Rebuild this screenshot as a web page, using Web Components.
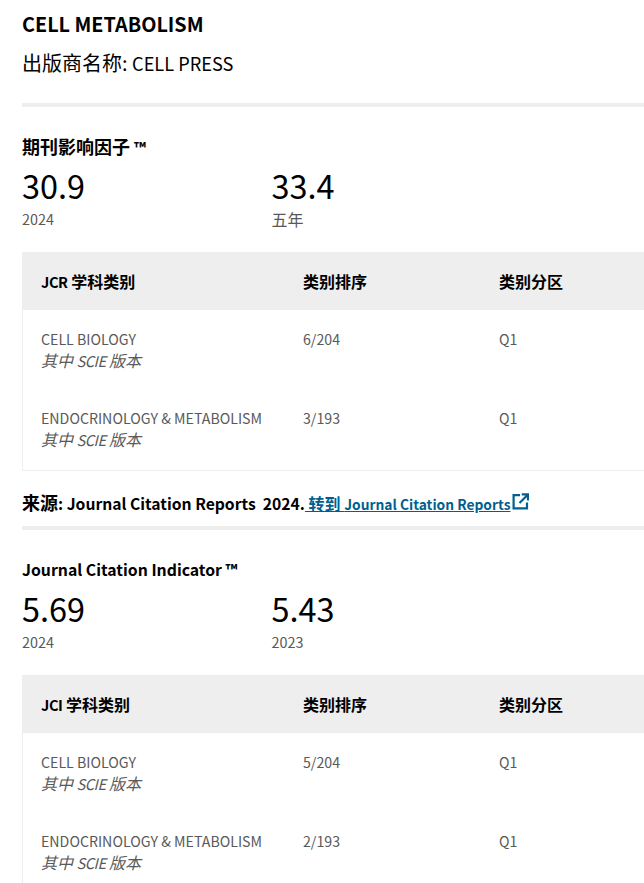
<!DOCTYPE html>
<html lang="zh">
<head>
<meta charset="utf-8">
<title>CELL METABOLISM</title>
<style>
    html, body { margin: 0; padding: 0; background: #fff; overflow: hidden; height: 883px; }
    body { font-family: "Noto Sans CJK SC", "Noto Sans", sans-serif; color: #000; }
</style>
</head>
<body>
<journal-panel>
    <journal-header title-text="CELL METABOLISM" publisher="出版商名称:" press="CELL PRESS"></journal-header>

    <metric-section heading="期刊影响因子" values="30.9|2024,33.4|五年"></metric-section>
    <rank-table first-latin="JCR" first-col="学科类别" rows="CELL BIOLOGY|6/204|Q1,ENDOCRINOLOGY &amp; METABOLISM|3/193|Q1"></rank-table>
    <source-line></source-line>

    <metric-section heading="Journal Citation Indicator" values="5.69|2024,5.43|2023"></metric-section>
    <rank-table first-latin="JCI" first-col="学科类别" rows="CELL BIOLOGY|5/204|Q1,ENDOCRINOLOGY &amp; METABOLISM|2/193|Q1"></rank-table>
</journal-panel>

<script>
const FONT = '"Noto Sans CJK SC", "Noto Sans", sans-serif';

class JournalPanel extends HTMLElement {
    constructor() {
        super();
        this.attachShadow({ mode: 'open' }).innerHTML = `
<style>
    :host { display: block; width: 700px; padding-left: 22px; box-sizing: border-box; font-family: ${FONT}; }
</style>
<slot></slot>`;
    }
}

class JournalHeader extends HTMLElement {
    connectedCallback() {
        this.attachShadow({ mode: 'open' }).innerHTML = `
<style>
    :host { display: block; padding-top: 9px; border-bottom: 4px solid #eeeeee; height: 94px; }
    h1 { margin: 0; font-size: 19.8px; line-height: 29px; font-weight: 700; }
    p { margin: 10px 0 0; font-size: 20px; line-height: 29px; font-weight: 400; }
    .latin { font-size: 18.2px; }
</style>
<h1>${this.getAttribute('title-text')}</h1>
<p>${this.getAttribute('publisher')} <span class="latin">${this.getAttribute('press')}</span></p>`;
    }
}

class MetricSection extends HTMLElement {
    connectedCallback() {
        var cells = this.getAttribute('values').split(',').map(v => {
            var parts = v.split('|');
            return `<div class="metric"><div class="value">${parts[0]}</div><div class="label">${parts[1]}</div></div>`;
        }).join('');
        var heading = this.getAttribute('heading');
        var isCjk = /[^\x00-\x7f]/.test(heading);
        this.attachShadow({ mode: 'open' }).innerHTML = `
<style>
    :host { display: block; padding-top: 28px; }
    h2 { margin: 0; height: 23px; font-size: ${isCjk ? 18 : 15.8}px; line-height: 23px; font-weight: 700; white-space: nowrap; }
    .tm { font-size: 15.8px; }
    .metrics { display: flex; margin-top: 7px; }
    .metric { width: 249.5px; }
    .value { font-size: 32.4px; line-height: 40px; }
    .label { font-size: 14.4px; line-height: 20px; height: 20px; color: #595959; margin-top: 4px; }
    .wide { font-size: 16px; }
</style>
<h2>${heading} <span class="tm">™</span></h2>
<div class="metrics">${cells}</div>`;
        this.shadowRoot.querySelectorAll('.label').forEach(l => {
            if (/[^\x00-\x7f]/.test(l.textContent)) l.classList.add('wide');
        });
    }
}

class RankTable extends HTMLElement {
    connectedCallback() {
        var rows = this.getAttribute('rows').split(',').map(r => {
            var c = r.split('|');
            return `<div class="row">
    <div class="cell"><div class="name">${c[0]}</div><div class="edition">其中 <span class="latin">SCIE</span> 版本</div></div>
    <div class="cell">${c[1]}</div>
    <div class="cell">${c[2]}</div>
</div>`;
        }).join('');
        this.attachShadow({ mode: 'open' }).innerHTML = `
<style>
    :host { display: block; margin-top: 23px; border: solid #eeeeee; border-width: 0 1px 1px; }
    .head, .row { display: grid; grid-template-columns: 262px 196px 1fr; padding-left: 18px; }
    .head { background: #eeeeee; height: 58px; align-items: center; font-size: 16px; font-weight: 700; margin-left: -1px; padding-left: 19px; }
    .head .latin { font-size: 14.6px; letter-spacing: -0.4px; }
    .row { font-size: 14.2px; line-height: 22px; color: #595959; height: 79px; box-sizing: border-box; padding-top: 18px; }
    .edition { font-style: italic; font-size: 16px; white-space: nowrap; margin-top: -1px; }
    .edition .latin { font-size: 14.6px; letter-spacing: -0.5px; }
    .body { padding-bottom: 2px; }
</style>
<div class="head"><div><span class="latin">${this.getAttribute('first-latin')}</span> ${this.getAttribute('first-col')}</div><div>类别排序</div><div>类别分区</div></div>
<div class="body">${rows}</div>`;
    }
}

class SourceLine extends HTMLElement {
    constructor() {
        super();
        this.attachShadow({ mode: 'open' }).innerHTML = `
<style>
    :host { display: block; height: 59px; box-sizing: border-box; border-bottom: 4px solid #eeeeee; padding-top: 19px; font-size: 15.7px; line-height: 24px; font-weight: 700; white-space: nowrap; }
    .cjk { font-size: 18px; }
    a { color: #005f8f; text-decoration: underline; font-size: 16px; }
    a span { font-size: 13.8px; }
    svg { width: 17px; height: 17px; vertical-align: 0; margin-left: 2px; }
</style>
<span class="cjk">来源</span>: Journal Citation Reports&nbsp; 2024.<a href="#"> 转到 <span>Journal Citation Reports</span></a><svg viewBox="0 0 17 17" fill="none" stroke="#005f8f" stroke-width="2.2"><path d="M8 2.1H1.6V15.4H15V9.5"/><path d="M7.5 10L15.5 2M9.8 1.4H16V7.5"/></svg>`;
    }
}

customElements.define('journal-panel', JournalPanel);
customElements.define('journal-header', JournalHeader);
customElements.define('metric-section', MetricSection);
customElements.define('rank-table', RankTable);
customElements.define('source-line', SourceLine);
</script>
</body>
</html>
